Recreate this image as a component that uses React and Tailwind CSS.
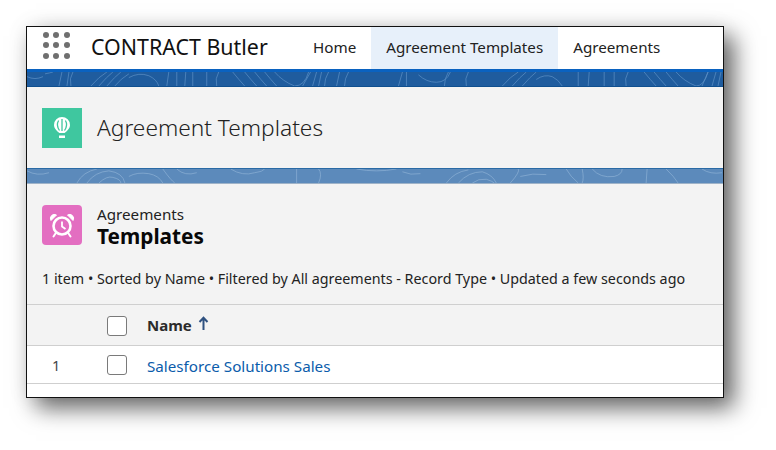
const FONT = "font-['Noto_Sans','Open_Sans',sans-serif]";

// contour lines from the header texture, repeated along the band
function BandLines({ stroke, paths }) {
  return (
    <svg className="absolute inset-0 h-full w-full" viewBox="0 0 697 15" preserveAspectRatio="none" fill="none" stroke={stroke} strokeWidth="0.7">
      {paths.map((d) => (
        <path key={d} d={d} />
      ))}
    </svg>
  );
}

const darkLines = [
  "M0 5q8 4 16 0", "M18 2q5-1 8-2", "M32 15l3-15", "M40 15l2-15", "M44 15q-2-8 2-15",
  "M64 15q8-10 16-15", "M72 15q8-10 14-15", "M80 15q8-10 14-15", "M88 15q6-8 14-13", "M102 6q10-6 20-2q8 4 10 11",
  "M140 15l2-15", "M150 15l0-15", "M158 15l1-15", "M166 15l0-15", "M180 15l0-15", "M190 15q-2-8 2-15",
  "M206 0q6 8 12 15", "M218 0q6 8 12 15", "M228 0q6 8 12 15", "M238 0q6 8 12 15", "M248 0q8 10 20 15q10 0 14-15",
  "M276 15l8-15", "M286 15l4-15", "M292 15l3-15", "M298 15q0-8 4-15", "M310 15l3-15", "M318 15q0-8 4-15",
  "M372 15l4-15", "M380 15l0-15", "M392 3q8 8 18 8q10 0 14-11", "M418 15q0-8 4-15", "M440 15q-2-8 2-15",
  "M476 15q8-10 16-15", "M486 15q8-10 14-15", "M496 15q8-10 14-15", "M510 8q8-6 16-3q6 3 10 10",
  "M552 15l0-15", "M562 15l1-15", "M578 15l0-15", "M588 15l0-15", "M600 15q-2-8 2-15",
  "M618 0q6 8 12 15", "M628 0q6 8 12 15", "M640 0q6 8 12 15", "M650 0q8 10 20 15q8 0 12-15", "M676 15l6-15", "M686 15l4-15", "M692 15l3-15",
];

const lightLines = [
  "M0 2q10 6 22 2", "M50 15q6-12 20-15", "M60 15q8-12 22-13q14 2 16 13", "M72 15q8-8 14-6q8 2 8 6", "M102 8q8-5 20-3q10 2 14 10",
  "M136 0q8 12 12 15", "M150 0q8 8 20 4", "M204 0q12 8 24 4q8-1 10-4", "M270 15l0-15", "M292 15q4-10 0-15", "M330 0q20 4 40 0",
  "M376 3q8 4 18 2", "M420 15q8-12 22-14", "M432 15q10-12 24-12q10 3 14 12", "M446 15q6-5 14-4q6 2 8 4", "M484 15q10-12 8-15", "M494 8q12-4 26-2",
  "M540 0q4 8 12 15", "M556 0q2 10 0 15", "M566 0q8 10 22 8q8-2 8-8", "M620 15l1-15", "M640 0q8 8 12 15", "M676 0q8 6 20 4",
];

function Checkbox() {
  return <span className="h-5 w-5 rounded-[3px] border border-[#7a7a7a] bg-white" />;
}

export default function App() {
  return (
    <div className={`h-[450px] w-[776px] overflow-hidden bg-white pl-[26px] pt-[26px] ${FONT}`}>
      <div className="flex h-[372px] w-[698px] flex-col border border-[#111] bg-white shadow-[10px_10px_22px_rgba(0,0,0,0.6),0_0_22px_rgba(0,0,0,0.06)]">
        <header className="flex h-[42px] items-stretch">
          <div className="ml-[16px] mt-[5px] grid h-[27px] w-[27px] grid-cols-3 gap-[4px] self-start">
            {[1, 2, 3, 4, 5, 6, 7, 8, 9].map((dot) => (
              <span key={dot} className="h-[6px] w-[6px] rounded-full bg-[#6f6f6f]" />
            ))}
          </div>
          <div className="ml-[21px] flex w-[208px] items-center pb-[2px] text-[21.400px] leading-none text-[#111]">
            CONTRACT Butler
          </div>
          <nav className="flex text-[15.200px] text-[#222]">
            <a className="flex items-center pb-[2px] pl-[14px] pr-[15px]">Home</a>
            <a className="flex w-[187px] items-center justify-center bg-[#e7f0fa] pb-[2px]">Agreement Templates</a>
            <a className="flex items-center px-[15px] pb-[2px]">Agreements</a>
          </nav>
        </header>

        <div className="h-[3px] bg-[#0a62c0]" />
        <div className="relative h-[15px] overflow-hidden border-b border-[#0f4f8f] bg-[#1f5c9e]">
          <BandLines stroke="#5f93c8" paths={darkLines} />
        </div>

        <section className="flex h-[81px] items-center gap-[15px] bg-[#f3f3f3] pl-[15px]">
          <div className="flex h-10 w-10 items-center justify-center bg-[#3fc79f]">
            <svg width="20" height="24" viewBox="0 0 20 24" fill="none">
              <path d="M10 1a8 8 0 0 0-8 8c0 3.6 3 6 5.4 8h5.2c2.4-2 5.4-4.4 5.4-8a8 8 0 0 0-8-8z" fill="#fff" />
              <path d="M10 3v12M6.6 4.5c-1.8 3-1.2 7 .9 10M13.4 4.500c1.800 3 1.200 7-.9 10" stroke="#3fc79f" strokeWidth="1.300" />
              <rect x="7" y="19.500" width="6" height="2.500" fill="#fff" />
            </svg>
          </div>
          <h1 className="pt-[2px] text-[22.700px] font-light leading-none text-[#222]">Agreement Templates</h1>
        </section>

        <div className="relative h-[16px] overflow-hidden border-y border-t-[#2a6aa5] border-b-[#9fb3c8] bg-[#5c8abb]">
          <BandLines stroke="#8fb2d6" paths={lightLines} />
        </div>

        <section className="flex h-[120px] flex-col bg-[#f3f3f3]">
          <div className="ml-[15px] mt-[21px] flex items-start gap-[15px]">
            <div className="flex h-10 w-10 items-center justify-center rounded-[4px] bg-[#e36ec1]">
              <svg width="28" height="28" viewBox="0 0 28 28" fill="none" stroke="#fff">
                <circle cx="14" cy="15" r="8.500" strokeWidth="2.600" />
                <path d="M14 10.500V15.500L17.500 18" strokeWidth="1.800" />
                <path d="M3 9.500a4 4 0 0 1 5.500-5.500zM25 9.500a4 4 0 0 0-5.500-5.500z" fill="#fff" strokeWidth="1" />
                <path d="M7.500 22.500L5.500 25.500M20.500 22.500L22.500 25.500" strokeWidth="2" strokeLinecap="round" />
              </svg>
            </div>
            <div className="flex flex-col">
              <span className="text-[15.200px] leading-[18px] text-[#222]">Agreements</span>
              <span className="text-[20.800px] font-bold leading-[26px] text-[#080808]">Templates</span>
            </div>
          </div>
          <p className="ml-[15px] mt-[20px] whitespace-nowrap text-[14.300px] leading-[20px] text-[#222]">
            1 item • Sorted by Name • Filtered by All agreements - Record Type • Updated a few seconds ago
          </p>
        </section>

        <div className="flex h-[42px] items-center border-y border-[#cfcfcf] bg-[#f3f3f3]">
          <div className="flex w-[100px] shrink-0 justify-end pt-[2px]">
            <Checkbox />
          </div>
          <span className="ml-[20px] text-[15px] font-bold text-[#2b2b2b]">Name</span>
          <svg className="ml-[6px] -translate-y-[2px]" width="11" height="14" viewBox="0 0 11 14" fill="none" stroke="#2f5180" strokeWidth="2">
            <path d="M5.500 14V2M1.500 6L5.500 1.800L9.500 6" />
          </svg>
        </div>

        <div className="flex h-[38px] items-center border-b border-[#cfcfcf] bg-white">
          <span className="w-[48px] shrink-0 pl-[25px] pt-[3px] text-[14.500px] text-[#444]">1</span>
          <div className="flex w-[52px] shrink-0 justify-end">
            <Checkbox />
          </div>
          <a className="ml-[20px] pt-[3px] text-[15.200px] text-[#0b5cab]">Salesforce Solutions Sales</a>
        </div>
      </div>
    </div>
  );
}
